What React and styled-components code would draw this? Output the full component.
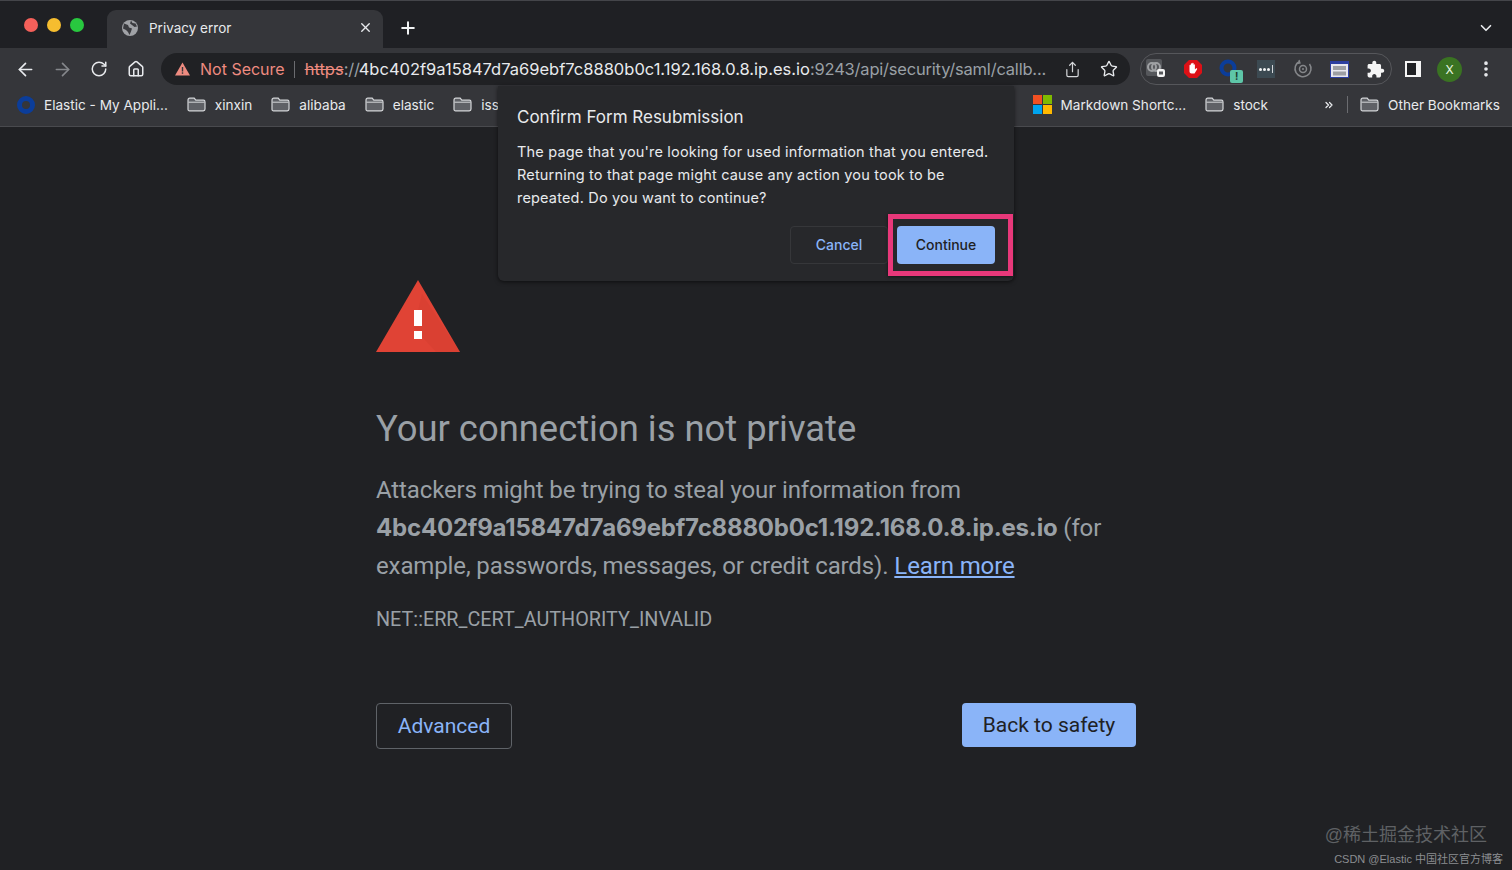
import styled, { createGlobalStyle } from "styled-components";
import { ArrowLeft, ArrowRight, RotateCw, Home, Plus, X, ChevronDown, Share, Star, MoreVertical, ChevronsRight } from "lucide-react";

const GlobalStyle = createGlobalStyle`
  html, body { margin: 0; padding: 0; height: 100%; background: #202124; }
  body { font-family: Inter, "Liberation Sans", sans-serif; overflow: hidden; }
`;

function FolderIcon() {
  return (
    <svg width="19" height="15" viewBox="0 0 19 15" fill="none">
      <path d="M1 3.2C1 2 1.7 1.2 2.8 1.2h4.4l1.6 2h7.6c1 0 1.6.7 1.6 1.7v7.2c0 1-.7 1.7-1.7 1.7H2.700C1.700 13.900 1 13.200 1 12.200z" fill="#5f6166" stroke="#d5d7da" strokeWidth="1.200" />
      <path d="M1.500 5.200h16" stroke="#d5d7da" strokeWidth="1" />
    </svg>
  );
}

function Bookmark({ label }) {
  return (
    <BookmarkItem>
      <FolderIcon />
      <span>{label}</span>
    </BookmarkItem>
  );
}

function App() {
  return (
    <Window>
      <GlobalStyle />
      <TabStrip>
        <Lights>
          <Light $color="#f5605a" />
          <Light $color="#f6bd2f" />
          <Light $color="#28c83f" />
        </Lights>
        <Tab>
          <svg width="18" height="18" viewBox="0 0 18 18">
            <circle cx="9" cy="9" r="8" fill="#a0a2a6" />
            <path d="M3 4.500l4 1.500 1 2.500 3 1-1 3-1.500 3.500-1.500-3-2-2-3-1.500zM10 1.500l1.500 2.500 3 .5 1.500 3-2.500.5L11 6l-2-1.500z" fill="#3a3b3f" />
          </svg>
          <TabTitle>Privacy error</TabTitle>
          <X size={15} color="#e8eaed" strokeWidth={2.2} />
        </Tab>
        <NewTab>
          <Plus size={20} color="#f1f3f4" strokeWidth={2.4} />
        </NewTab>
        <TabListBtn>
          <ChevronDown size={18} color="#e8eaed" strokeWidth={2.2} />
        </TabListBtn>
      </TabStrip>

      <Toolbar>
        <NavIcons>
          <NavSlot><ArrowLeft size={21} color="#e8eaed" strokeWidth={1.9} /></NavSlot>
          <NavSlot><ArrowRight size={21} color="#85878b" strokeWidth={1.9} /></NavSlot>
          <NavSlot><RotateCw size={18} color="#e8eaed" strokeWidth={2} /></NavSlot>
          <NavSlot><Home size={18} color="#e8eaed" strokeWidth={2} /></NavSlot>
        </NavIcons>
        <Omnibox>
          <svg width="15" height="14" viewBox="0 0 15 14">
            <path d="M7.500 0.500L15 13.500H0z" fill="#ee8b80" />
            <rect x="6.800" y="5" width="1.400" height="4.500" fill="#35363a" />
            <rect x="6.800" y="10.300" width="1.400" height="1.500" fill="#35363a" />
          </svg>
          <NotSecure>Not Secure</NotSecure>
          <OmniDivider />
          <Url>
            <Https>https</Https>
            <Dim>://</Dim>
            <Host>4bc402f9a15847d7a69ebf7c8880b0c1.192.168.0.8.ip.es.io</Host>
            <Dim>:9243/api/security/saml/callb...</Dim>
          </Url>
          <OmniActions>
            <Share size={17} color="#d5d7da" strokeWidth={1.7} />
            <Star size={18} color="#e8eaed" strokeWidth={1.8} />
          </OmniActions>
        </Omnibox>
        <Extensions>
          <ExtSlot>
            <svg width="20" height="20" viewBox="0 0 20 20">
              <rect x="0" y="0" width="16" height="17" rx="2" fill="#55575b" />
              <circle cx="6" cy="8" r="4" fill="none" stroke="#9fa1a4" strokeWidth="2" />
              <circle cx="10" cy="8" r="4" fill="none" stroke="#9fa1a4" strokeWidth="2" />
              <rect x="11" y="10" width="8" height="8" rx="2" fill="#f4f4f4" />
              <rect x="13" y="12.500" width="4" height="3" fill="#55575b" />
            </svg>
          </ExtSlot>
          <ExtSlot>
            <svg width="20" height="20" viewBox="0 0 20 20">
              <path d="M6 1h8l5 5v8l-5 5H6l-5-5V6z" fill="#dd1016" />
              <path d="M6.500 9.500V6.500c0-1 1.300-1 1.300 0V5c0-1 1.400-1 1.400 0v-.5c0-1 1.400-1 1.400 0V6c0-1 1.300-1 1.300 0v4.500l1-1c.8-.7 1.700.1 1.100 1l-2.500 4H8.500C7 14.500 6.500 13.500 6.500 12z" fill="#fff" />
            </svg>
          </ExtSlot>
          <ExtSlot>
            <svg width="20" height="20" viewBox="0 0 20 20">
              <circle cx="9" cy="9" r="6.500" fill="none" stroke="#0b3d9a" strokeWidth="4" />
            </svg>
            <ExtBadge>!</ExtBadge>
          </ExtSlot>
          <ExtSlot>
            <DotsTile>
              <Dot />
              <Dot />
              <Dot />
              <DotBar />
            </DotsTile>
          </ExtSlot>
          <ExtSlot>
            <svg width="20" height="20" viewBox="0 0 20 20" fill="none">
              <path d="M16.500 5a8 8 0 1 1-10-2.500" stroke="#85878a" strokeWidth="1.500" />
              <path d="M6 1l1 3-3 .5" stroke="#85878a" strokeWidth="1.300" />
              <circle cx="10" cy="10" r="3.500" stroke="#85878a" strokeWidth="1.500" />
              <circle cx="10" cy="10" r="1" fill="#85878a" />
            </svg>
          </ExtSlot>
          <ExtSlot>
            <svg width="19" height="17" viewBox="0 0 19 17">
              <rect x="0.500" y="0.500" width="18" height="16" fill="#e8e8ef" stroke="#2c3fa0" />
              <rect x="0.500" y="0.500" width="18" height="2.500" fill="#2c3fa0" />
              <rect x="3" y="5" width="13" height="4" fill="#9c9ea3" />
              <rect x="3" y="10.500" width="13" height="4" fill="#9c9ea3" />
            </svg>
          </ExtSlot>
          <ExtSlot>
            <svg width="19" height="19" viewBox="0 0 24 24">
              <path d="M20.500 11H19V7c0-1.100-.9-2-2-2h-4V3.500C13 2.120 11.880 1 10.500 1S8 2.120 8 3.500V5H4c-1.100 0-1.990.9-1.990 2v3.800H3.500c1.490 0 2.700 1.210 2.700 2.700s-1.210 2.700-2.700 2.700H2V20c0 1.100.9 2 2 2h3.800v-1.500c0-1.490 1.210-2.700 2.700-2.700 1.490 0 2.700 1.210 2.700 2.700V22H17c1.100 0 2-.9 2-2v-4h1.500c1.380 0 2.500-1.120 2.500-2.500S21.880 11 20.500 11z" fill="#f5f5f5" />
            </svg>
          </ExtSlot>
        </Extensions>
        <ProfileGroup>
          <SidePanelIcon />
          <Avatar>X</Avatar>
          <MoreVertical size={20} color="#e8eaed" strokeWidth={2.4} />
        </ProfileGroup>
      </Toolbar>

      <BookmarksBar>
        <BookmarkItem>
          <ElasticRing />
          <span>Elastic - My Appli...</span>
        </BookmarkItem>
        <Bookmark label="xinxin" />
        <Bookmark label="alibaba" />
        <Bookmark label="elastic" />
        <Bookmark label="issue" />
        <BookmarkSpacer />
        <BookmarkItem>
          <MsLogo>
            <i style={{ background: "#f25022" }} />
            <i style={{ background: "#7fba00" }} />
            <i style={{ background: "#00a4ef" }} />
            <i style={{ background: "#ffb900" }} />
          </MsLogo>
          <span>Markdown Shortc...</span>
        </BookmarkItem>
        <Bookmark label="stock" />
        <Overflow>
          <ChevronsRight size={12} color="#e8eaed" strokeWidth={2.5} />
        </Overflow>
        <BarDivider />
        <Bookmark label="Other Bookmarks" />
      </BookmarksBar>

      <Page>
        <Content>
          <svg width="84" height="72" viewBox="0 0 84 72">
            <path d="M42 0L84 72H0z" fill="#e04335" />
            <path d="M46 14L84 72H60L38 48z" fill="#c9392c" opacity="0.25" />
            <rect x="38" y="30" width="8" height="16" fill="#fff" />
            <rect x="38" y="51" width="8" height="8" fill="#fff" />
          </svg>
          <Heading>Your connection is not private</Heading>
          <Body>
            Attackers might be trying to steal your information from <BoldHost>4bc402f9a15847d7a69ebf7c8880b0c1.192.168.0.8.ip.es.io</BoldHost> (for example, passwords, messages, or credit cards). <LearnMore>Learn more</LearnMore>
          </Body>
          <ErrorCode>NET::ERR_CERT_AUTHORITY_INVALID</ErrorCode>
          <Buttons>
            <AdvancedBtn>Advanced</AdvancedBtn>
            <SafetyBtn>Back to safety</SafetyBtn>
          </Buttons>
        </Content>
        <Watermark>
          <WatermarkMain>@稀土掘金技术社区</WatermarkMain>
          <WatermarkSub>CSDN @Elastic 中国社区官方博客</WatermarkSub>
        </Watermark>
      </Page>

      <Dialog>
        <DialogTitle>Confirm Form Resubmission</DialogTitle>
        <DialogText>
          The page that you're looking for used information that you entered. Returning to that page might cause any action you took to be repeated. Do you want to continue?
        </DialogText>
        <DialogActions>
          <CancelBtn>Cancel</CancelBtn>
          <ContinueBtn>Continue</ContinueBtn>
        </DialogActions>
      </Dialog>
    </Window>
  );
}

const Window = styled.div`
  position: relative;
  width: 1512px;
  height: 870px;
  display: flex;
  flex-direction: column;
  background: #202124;
  overflow: hidden;
`;

const TabStrip = styled.div`
  height: 48px;
  display: flex;
  align-items: flex-end;
  background: #1f2024;
  border-top: 1px solid #44454a;
  box-sizing: border-box;
`;

const Lights = styled.div`
  display: flex;
  gap: 9px;
  padding: 0 23px 0 24px;
  align-self: flex-start;
  margin-top: 17px;
`;

const Light = styled.div`
  width: 14px;
  height: 14px;
  border-radius: 50%;
  background: ${(p) => p.$color};
`;

const Tab = styled.div`
  width: 276px;
  height: 38px;
  box-sizing: border-box;
  padding: 0 10px 3px 14px;
  display: flex;
  align-items: center;
  background: #35363a;
  border-radius: 9px 9px 0 0;
`;

const TabTitle = styled.span`
  flex: 1;
  margin-left: 10px;
  font-size: 13.500px;
  color: #e8eaed;
`;

const NewTab = styled.div`
  margin-left: 15px;
  height: 38px;
  padding-bottom: 3px;
  box-sizing: border-box;
  display: flex;
  align-items: center;
`;

const TabListBtn = styled.div`
  margin-left: auto;
  margin-right: 17px;
  height: 38px;
  padding-bottom: 3px;
  box-sizing: border-box;
  display: flex;
  align-items: center;
`;

const Toolbar = styled.div`
  height: 42px;
  display: flex;
  align-items: center;
  background: #35363a;
`;

const NavIcons = styled.div`
  width: 161px;
  padding-left: 6.500px;
  box-sizing: border-box;
  display: flex;
  align-items: center;
`;

const NavSlot = styled.div`
  width: 37px;
  display: flex;
  justify-content: center;
`;

const Omnibox = styled.div`
  width: 969px;
  height: 32px;
  box-sizing: border-box;
  padding: 0 12px 0 14px;
  border-radius: 16px;
  background: #202124;
  display: flex;
  align-items: center;
`;

const NotSecure = styled.span`
  margin-left: 10px;
  font-size: 16px;
  color: #ee8b80;
`;

const OmniDivider = styled.div`
  width: 1px;
  height: 17px;
  margin: 0 10px 0 9px;
  background: #6b6c70;
`;

const Url = styled.div`
  flex: 1;
  font-size: 16.500px;
  color: #e8eaed;
  white-space: nowrap;
`;

const Https = styled.span`
  color: #ee8b80;
  text-decoration: line-through;
`;

const Dim = styled.span`
  color: #9aa0a6;
  letter-spacing: -0.2px;
`;

const Host = styled.span`
  margin-left: -1px;
`;

const OmniActions = styled.div`
  display: flex;
  align-items: center;
  gap: 19px;
  margin-left: 12px;
`;

const Extensions = styled.div`
  width: 252px;
  height: 32px;
  margin-left: 10px;
  box-sizing: border-box;
  padding: 0 4px;
  border: 1px solid #56575b;
  border-radius: 16px;
  display: flex;
  align-items: center;
  justify-content: space-between;
`;

const ExtSlot = styled.div`
  position: relative;
  width: 22px;
  height: 22px;
  display: flex;
  align-items: center;
  justify-content: center;
`;

const ExtBadge = styled.span`
  position: absolute;
  left: 12px;
  top: 12px;
  width: 13px;
  height: 13px;
  border-radius: 2px;
  background: #5ec6a8;
  color: #1c3a30;
  font-size: 10px;
  font-weight: 700;
  line-height: 13px;
  text-align: center;
`;

const DotsTile = styled.div`
  width: 18px;
  height: 18px;
  background: #3c4a52;
  display: flex;
  align-items: center;
  justify-content: center;
  gap: 1px;
`;

const Dot = styled.i`
  width: 3px;
  height: 3px;
  border-radius: 50%;
  background: #f1f3f4;
`;

const DotBar = styled.i`
  width: 1px;
  height: 8px;
  margin-left: 1px;
  background: #d5d7da;
`;

const ProfileGroup = styled.div`
  margin-left: 13px;
  display: flex;
  align-items: center;
`;

const SidePanelIcon = styled.div`
  width: 16px;
  height: 16px;
  box-sizing: border-box;
  border: 2px solid #f5f5f5;
  border-right-width: 5px;
  background: #202124;
`;

const Avatar = styled.div`
  width: 25px;
  height: 25px;
  margin: 0 14px 0 16px;
  border-radius: 50%;
  background: #3a7322;
  color: #e8f5e0;
  font-size: 12px;
  line-height: 25px;
  text-align: center;
`;

const BookmarksBar = styled.div`
  height: 37px;
  box-sizing: border-box;
  padding: 0 12px 7px 17px;
  display: flex;
  align-items: center;
  gap: 19px;
  background: #35363a;
  border-bottom: 1px solid #494a4e;
`;

const BookmarkItem = styled.div`
  display: flex;
  align-items: center;
  gap: 9px;
  font-size: 13.600px;
  color: #e8eaed;
  white-space: nowrap;
`;

const BookmarkSpacer = styled.div`
  flex: 1;
`;

const ElasticRing = styled.div`
  width: 18px;
  height: 18px;
  box-sizing: border-box;
  border-radius: 50%;
  border: 5px solid #0b3d9a;
`;

const MsLogo = styled.div`
  width: 19px;
  height: 19px;
  display: grid;
  grid-template-columns: 1fr 1fr;
  gap: 1px;
`;

const Overflow = styled.div`
  display: flex;
  margin-left: 36px;
`;

const BarDivider = styled.div`
  width: 1px;
  height: 17px;
  margin: 0 -7px 0 -7px;
  background: #6b6c70;
`;

const Page = styled.main`
  position: relative;
  flex: 1;
  background: #202124;
`;

const Content = styled.div`
  width: 760px;
  margin-left: 376px;
  padding-top: 153px;
  display: flex;
  flex-direction: column;
  align-items: flex-start;
  font-family: Roboto, "Liberation Sans", sans-serif;
`;

const Heading = styled.h1`
  margin: 55px 0 0;
  font-size: 36.400px;
  line-height: 44px;
  font-weight: 400;
  color: #9aa0a6;
`;

const Body = styled.p`
  margin: 20px 0 0;
  font-size: 24px;
  line-height: 38px;
  letter-spacing: -0.12px;
  color: #9aa0a6;
`;

const BoldHost = styled.b`
  font-family: Inter, sans-serif;
  letter-spacing: -0.2px;
`;

const LearnMore = styled.a`
  color: #8ab4f8;
  text-decoration: underline;
`;

const ErrorCode = styled.div`
  margin-top: 21px;
  font-size: 19.800px;
  line-height: 28px;
  color: #9aa0a6;
`;

const Buttons = styled.div`
  width: 100%;
  margin-top: 69px;
  display: flex;
  justify-content: space-between;
  align-items: flex-start;
`;

const AdvancedBtn = styled.button`
  width: 136px;
  height: 46px;
  padding: 0;
  border: 1px solid #5f6368;
  border-radius: 4px;
  background: transparent;
  color: #8ab4f8;
  font: 400 21px Roboto, sans-serif;
`;

const SafetyBtn = styled.button`
  width: 174px;
  height: 44px;
  padding: 0;
  border: none;
  border-radius: 4px;
  background: #8ab4f8;
  color: #202124;
  font: 400 21px Roboto, sans-serif;
`;

const Watermark = styled.div`
  position: absolute;
  right: 9px;
  bottom: 4px;
  display: flex;
  flex-direction: column;
  align-items: flex-end;
  font-family: "Liberation Sans", "Noto Sans CJK SC", sans-serif;
`;

const WatermarkMain = styled.div`
  margin-right: 16px;
  font-size: 18px;
  color: #5f6164;
`;

const WatermarkSub = styled.div`
  margin-top: 4px;
  font-size: 11px;
  color: #8b8d90;
`;

const Dialog = styled.section`
  position: absolute;
  left: 498px;
  top: 86px;
  width: 516px;
  height: 195px;
  box-sizing: border-box;
  padding: 20px 19px;
  background: #27282b;
  border-radius: 0 0 6px 6px;
  box-shadow: 0 1px 4px rgba(0, 0, 0, 0.6);
`;

const DialogTitle = styled.h2`
  margin: 0;
  font-size: 17px;
  line-height: 22px;
  font-weight: 400;
  color: #e8eaed;
`;

const DialogText = styled.p`
  margin: 11.500px 0 0;
  font-size: 14.500px;
  line-height: 23px;
  letter-spacing: 0.18px;
  color: #e8eaed;
`;

const DialogActions = styled.div`
  margin-top: 17.500px;
  display: flex;
  justify-content: flex-end;
  gap: 9px;
`;

const CancelBtn = styled.button`
  width: 98px;
  height: 38px;
  padding: 0 0 2px;
  border: 1px solid #36373a;
  border-radius: 4px;
  background: transparent;
  color: #8ab4f8;
  font: 500 14px Inter, sans-serif;
`;

const ContinueBtn = styled.button`
  position: relative;
  width: 98px;
  height: 38px;
  padding: 0 0 2px;
  border: none;
  border-radius: 4px;
  background: #8ab4f8;
  color: #202124;
  font: 500 14px Inter, sans-serif;

  &::after {
    content: "";
    position: absolute;
    left: -9px;
    right: -18px;
    top: -12px;
    bottom: -12px;
    border: 5px solid #e8387a;
    box-shadow: 0 1px 3px rgba(0, 0, 0, 0.5);
  }
`;

export default App;
